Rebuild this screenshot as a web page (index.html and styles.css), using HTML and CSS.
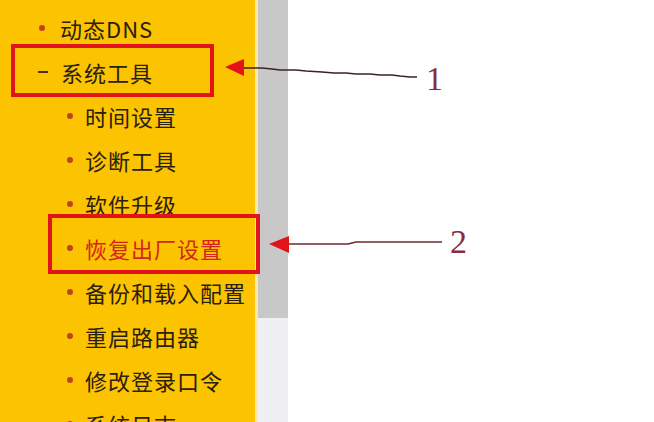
FILE: index.html
```html
<!DOCTYPE html>
<html lang="zh-CN">
<head>
<meta charset="utf-8">
<title>系统工具</title>
<link rel="stylesheet" href="styles.css">
</head>
<body>
<div class="page">
  <nav class="sidebar">
    <div class="item top"><span class="dot"></span><span class="label">动态DNS</span></div>
    <div class="item top open"><span class="dash"></span><span class="label">系统工具</span></div>
    <div class="item sub"><span class="dot"></span><span class="label">时间设置</span></div>
    <div class="item sub"><span class="dot"></span><span class="label">诊断工具</span></div>
    <div class="item sub"><span class="dot"></span><span class="label">软件升级</span></div>
    <div class="item sub active"><span class="dot"></span><span class="label">恢复出厂设置</span></div>
    <div class="item sub"><span class="dot"></span><span class="label">备份和载入配置</span></div>
    <div class="item sub"><span class="dot"></span><span class="label">重启路由器</span></div>
    <div class="item sub"><span class="dot"></span><span class="label">修改登录口令</span></div>
    <div class="item sub"><span class="dot"></span><span class="label">系统日志</span></div>
  </nav>
  <div class="edge"></div>
  <div class="scrollbar"><div class="thumb"></div></div>
  <main class="content"></main>

  <div class="mark mark1"></div>
  <div class="mark mark2"></div>
  <svg class="arrows" width="654" height="422" viewBox="0 0 654 422" xmlns="http://www.w3.org/2000/svg">
    <polyline points="243,68 262,68 272,69 280,70 296,70 306,71 322,72 334,73 346,73 356,74 370,74 380,75 392,75 400,76 410,77 417,77" fill="none" stroke="#3a2328" stroke-width="1.6"/>
    <polygon points="225,67 244,59 244,76" fill="#e2141a"/>
    <polyline points="288,244 348,244 356,242 442,242" fill="none" stroke="#6e2a32" stroke-width="1.6"/>
    <polygon points="269,244 289,236 289,253" fill="#e2141a"/>
  </svg>
  <span class="num num1">1</span>
  <span class="num num2">2</span>
</div>
</body>
</html>
```

FILE: styles.css
```css
html, body {
  margin: 0;
  padding: 0;
  background: #ffffff;
}
.page {
  position: relative;
  width: 654px;
  height: 422px;
  overflow: hidden;
  display: flex;
  flex-direction: row;
}
.sidebar {
  width: 255px;
  flex: none;
  background: #fcc300;
  display: flex;
  flex-direction: column;
  padding-top: 6px;
  font-family: "Noto Sans CJK SC", "Noto Sans", sans-serif;
  font-size: 22px;
  color: #2a2010;
}
.edge {
  width: 3px;
  flex: none;
  background: #fbe9a8;
}
.item {
  height: 44px;
  flex: none;
  display: flex;
  align-items: center;
  white-space: nowrap;
}
.label {
  letter-spacing: 1px;
  line-height: 1;
}
.top {
  padding-left: 39px;
}
.top .dot {
  margin-right: 15px;
}
.open {
  padding-left: 38px;
}
.dash {
  width: 10px;
  height: 2px;
  background: #5a2a10;
  margin-right: 13px;
}
.sub {
  padding-left: 67px;
}
.sub .dot {
  margin-right: 12px;
}
.dot {
  width: 6px;
  height: 6px;
  border-radius: 50%;
  background: #c0441a;
  flex: none;
}
.active .label {
  color: #d4261c;
}
.scrollbar {
  width: 30px;
  flex: none;
  background: #f0f0f2;
  display: flex;
  flex-direction: column;
}
.thumb {
  height: 318px;
  background: #c8c8c8;
}
.content {
  flex: 1;
  background: #ffffff;
}
.mark {
  position: absolute;
  border: 4px solid #e0141a;
  box-sizing: border-box;
}
.mark1 {
  left: 11px;
  top: 44px;
  width: 203px;
  height: 53px;
}
.mark2 {
  left: 48px;
  top: 214px;
  width: 212px;
  height: 60px;
}
.arrows {
  position: absolute;
  left: 0;
  top: 0;
}
.num {
  position: absolute;
  font-family: "Liberation Serif", "DejaVu Serif", serif;
  font-size: 34px;
  line-height: 1;
  color: #8a2d40;
}
.num1 {
  left: 426px;
  top: 62px;
}
.num2 {
  left: 450px;
  top: 225px;
}
```
